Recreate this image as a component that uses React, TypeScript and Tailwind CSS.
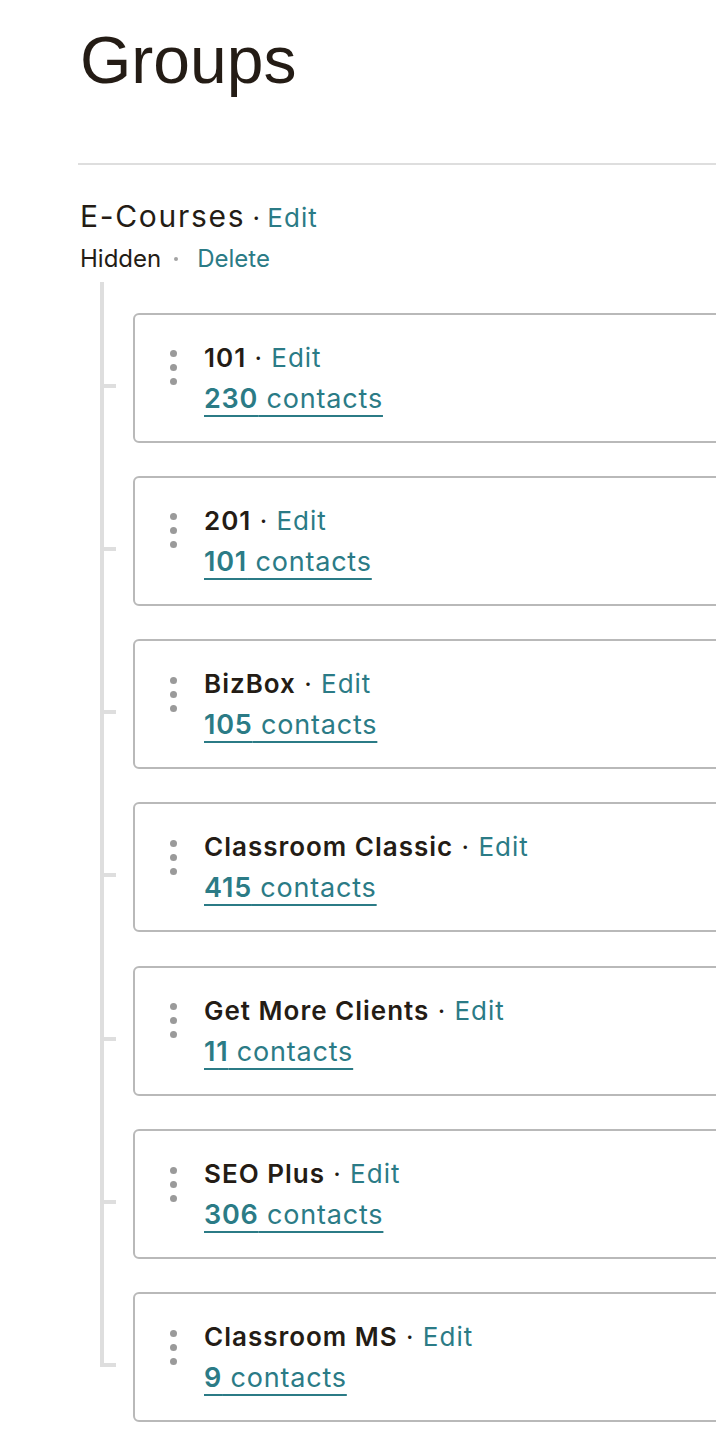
import React from "react"

const groups = [
  { name: "101", count: 230 },
  { name: "201", count: 101 },
  { name: "BizBox", count: 105 },
  { name: "Classroom Classic", count: 415 },
  { name: "Get More Clients", count: 11 },
  { name: "SEO Plus", count: 306 },
  { name: "Classroom MS", count: 9 },
]

function Dots() {
  return (
    <div className="flex flex-col gap-[7px] mt-[12.5px] w-[7px] shrink-0">
      <span className="block w-[7px] h-[7px] rounded-full bg-[#9a9a9a]" />
      <span className="block w-[7px] h-[7px] rounded-full bg-[#9a9a9a]" />
      <span className="block w-[7px] h-[7px] rounded-full bg-[#9a9a9a]" />
    </div>
  )
}

function GroupRow({ name, count, last }: { name: string; count: number; last: boolean }) {
  return (
    <div className="flex">
      {/* tree connector */}
      <div className="flex flex-col w-[33px] shrink-0">
        <div className="w-[4px] h-[71px] bg-[#dedede]" />
        <div className="w-[16px] h-[4px] bg-[#dedede]" />
        {!last && <div className="w-[4px] flex-1 bg-[#dedede]" />}
      </div>
      <div className={last ? "" : "pb-[33.33px]"}>
        <div className="w-[640px] h-[130px] rounded-[6px] border-2 border-[#b9b9b9] bg-white pl-[35px] pt-[23px] flex gap-[27px]">
          <Dots />
          <div>
            <div className="text-[26px] leading-[40px] tracking-[1px] text-[#241c15]">
              <span className="font-semibold">{name}</span>
              <span> · </span>
              <a className="text-[#2b7b86] cursor-pointer">Edit</a>
            </div>
            <div className="text-[27px] leading-[42px] tracking-[0.8px]">
              <a className="text-[#2b7b86] underline decoration-2 underline-offset-[7px] cursor-pointer">
                <span className="font-semibold">{count}</span> contacts
              </a>
            </div>
          </div>
        </div>
      </div>
    </div>
  )
}

export default function App() {
  return (
    <div className="w-full overflow-hidden bg-white min-h-[1448px] font-['Inter',sans-serif] text-[#241c15]">
      <div className="pl-[78px] pt-[27px]">
        <h1 className="ml-[2px] font-['Liberation_Sans',Arial,sans-serif] text-[66px] leading-none font-normal">
          Groups
        </h1>
        <div className="mt-[70px] h-[2px] bg-[#dedede]" />

        <div className="ml-[2px] mt-[33px]">
          <div className="leading-[36px]">
            <span className="text-[30px] tracking-[1.7px]">E-Courses</span>
            <span className="text-[26px]"> · </span>
            <a className="text-[26px] tracking-[1px] text-[#2b7b86] cursor-pointer">Edit</a>
          </div>
          <div className="mt-[5px] text-[24px] leading-[30px] flex items-center">
            <span>Hidden</span>
            <span className="ml-[13px] mr-[19px] w-[4px] h-[4px] rounded-full bg-[#a3a3a3]" />
            <a className="text-[#2b7b86] cursor-pointer">Delete</a>
          </div>

          <div className="mt-[7.5px] ml-[20px]">
            <div className="w-[4px] h-[31px] bg-[#dedede]" />
            {groups.map((g, i) => (
              <GroupRow key={g.name} name={g.name} count={g.count} last={i === groups.length - 1} />
            ))}
          </div>
        </div>
      </div>
    </div>
  )
}
